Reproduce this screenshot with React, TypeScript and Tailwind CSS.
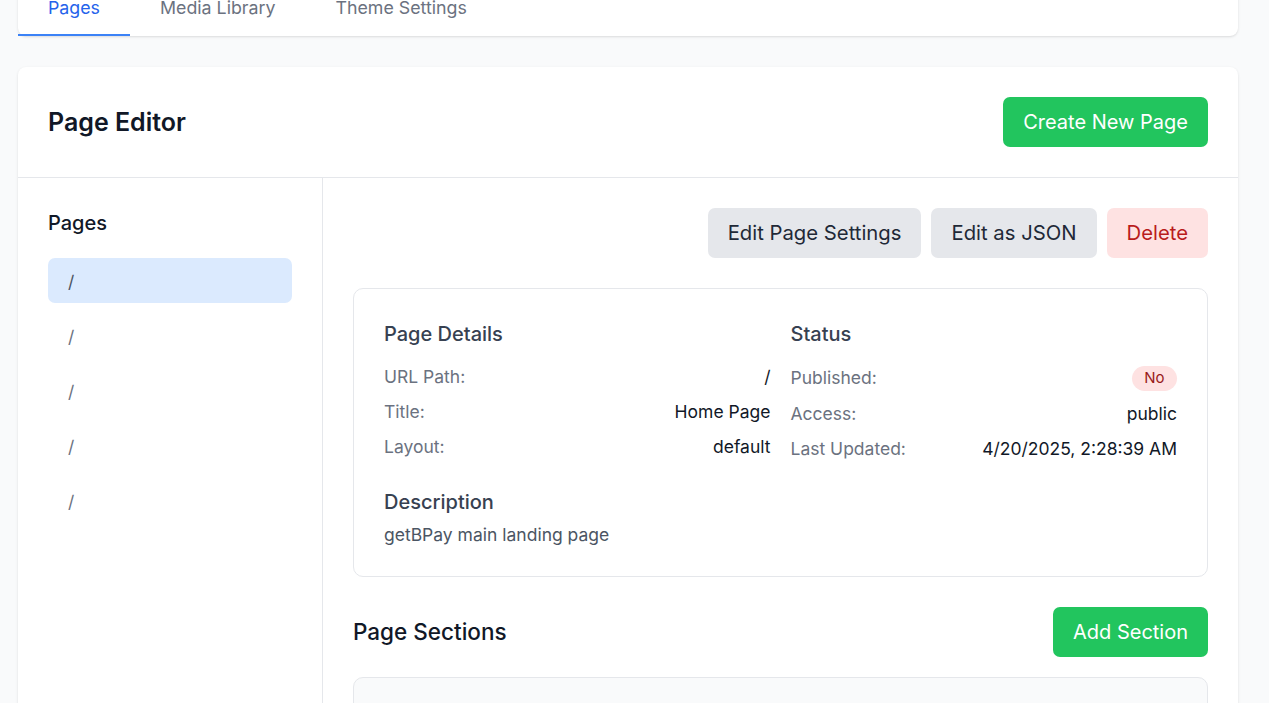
import React, { useState } from 'react';

interface DetailRow {
    label: string;
    value: React.ReactNode;
}

const pages = ['/', '/', '/', '/', '/'];

function Row({ label, value }: DetailRow) {
    return (
        <div className="flex justify-between items-center">
            <span className="text-[#6b7280]">{label}</span>
            <span className="text-[#111827]">{value}</span>
        </div>
    );
}

export default function App() {
    const [activeTab, setActiveTab] = useState('Pages');
    const [selected, setSelected] = useState(0);

    const tabs = ['Pages', 'Media Library', 'Theme Settings'];

    return (
        <div className="min-h-screen bg-[#f9fafb] font-['Inter',sans-serif] overflow-hidden">
            <div className="w-[1220px] ml-[18px] -mt-[19px]">
                {/* Tabs */}
                <div className="bg-white rounded-lg shadow-sm flex mb-[31px]">
                    {tabs.map(tab => (
                        <button
                            key={tab}
                            onClick={() => setActiveTab(tab)}
                            className={
                                activeTab === tab
                                    ? 'px-[30px] pt-[14px] pb-[14px] text-[17.8px] leading-[25px] text-[#2563eb] border-b-[2.5px] border-[#3b82f6]'
                                    : 'px-[30px] pt-[14px] pb-[14px] text-[17.8px] leading-[25px] text-[#6b7280] border-b-[2.5px] border-transparent'
                            }
                        >
                            {tab}
                        </button>
                    ))}
                </div>

                {/* Editor card */}
                <div className="bg-white rounded-lg shadow-sm">
                    <div className="flex justify-between items-center p-[30px] border-b border-[#e5e7eb]">
                        <h1 className="text-[25px] leading-[35px] font-semibold text-[#111827]">Page Editor</h1>
                        <button className="bg-[#22c55e] text-white text-[20px] leading-[30px] px-5 py-[10px] rounded-[7px]">
                            Create New Page
                        </button>
                    </div>

                    <div className="flex">
                        {/* Sidebar */}
                        <div className="w-[305px] shrink-0 border-r border-[#e5e7eb] p-[30px] min-h-[560px]">
                            <h2 className="text-[20px] leading-[30px] font-medium text-[#111827] mb-5">Pages</h2>
                            <div className="flex flex-col gap-[10px]">
                                {pages.map((p, i) => (
                                    <button
                                        key={i}
                                        onClick={() => setSelected(i)}
                                        className={
                                            selected === i
                                                ? 'text-left h-[45px] pt-[3px] px-5 rounded-[7px] text-[17.5px] bg-[#dbeafe] text-[#4b5563]'
                                                : 'text-left h-[45px] pt-[3px] px-5 rounded-[7px] text-[17.5px] text-[#6b7280]'
                                        }
                                    >
                                        {p}
                                    </button>
                                ))}
                            </div>
                        </div>

                        {/* Main */}
                        <div className="flex-1 p-[30px]">
                            <div className="flex justify-end gap-[10px] mb-[30px]">
                                <button className="bg-[#e5e7eb] text-[#1f2937] text-[20.3px] leading-[30px] px-5 py-[10px] rounded-[7px]">
                                    Edit Page Settings
                                </button>
                                <button className="bg-[#e5e7eb] text-[#1f2937] text-[20.3px] leading-[30px] px-5 py-[10px] rounded-[7px]">
                                    Edit as JSON
                                </button>
                                <button className="bg-[#fee2e2] text-[#b91c1c] text-[20.3px] leading-[30px] px-5 py-[10px] rounded-[7px]">
                                    Delete
                                </button>
                            </div>

                            <div className="border border-[#e5e7eb] rounded-[10px] px-[30px] pt-[30px] pb-[29px] text-[17.5px] leading-[25px]">
                                <div className="grid grid-cols-2 gap-5">
                                    <div>
                                        <h3 className="text-[20px] leading-[30px] font-medium text-[#374151] mb-[15px]">Page Details</h3>
                                        <div className="flex flex-col gap-[10px]">
                                            <Row label="URL Path:" value="/" />
                                            <Row label="Title:" value="Home Page" />
                                            <Row label="Layout:" value="default" />
                                        </div>
                                    </div>
                                    <div>
                                        <h3 className="text-[20px] leading-[30px] font-medium text-[#374151] mb-[15px]">Status</h3>
                                        <div className="flex flex-col gap-[10px]">
                                            <Row
                                                label="Published:"
                                                value={
                                                    <span className="inline-block bg-[#fee2e2] text-[#991b1b] text-[15px] leading-[20px] px-[12.5px] py-[2.5px] rounded-full">
                                                        No
                                                    </span>
                                                }
                                            />
                                            <Row label="Access:" value="public" />
                                            <Row label="Last Updated:" value="4/20/2025, 2:28:39 AM" />
                                        </div>
                                    </div>
                                </div>

                                <div className="mt-[26px]">
                                    <h3 className="text-[20px] leading-[30px] font-medium text-[#374151] mb-[5px]">Description</h3>
                                    <p className="text-[#4b5563]">getBPay main landing page</p>
                                </div>
                            </div>

                            <div className="flex justify-between items-center mt-[30px] mb-5">
                                <h2 className="text-[22.5px] leading-[35px] font-medium text-[#111827]">Page Sections</h2>
                                <button className="bg-[#22c55e] text-white text-[20px] leading-[30px] px-5 py-[10px] rounded-[7px]">
                                    Add Section
                                </button>
                            </div>

                            <div className="bg-[#f9fafb] border border-[#e5e7eb] rounded-[10px] h-[200px]" />
                        </div>
                    </div>
                </div>
            </div>
        </div>
    );
}
